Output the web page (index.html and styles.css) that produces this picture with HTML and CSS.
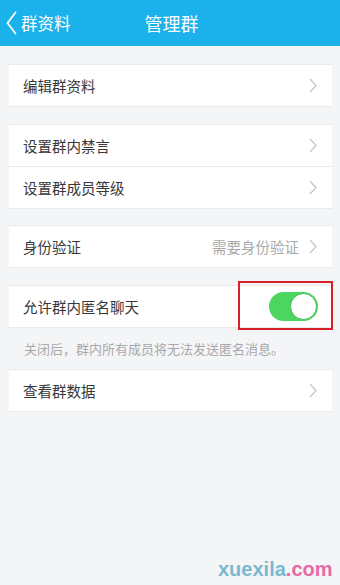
FILE: index.html
```html
<!DOCTYPE html>
<html lang="zh-CN">
<head>
<meta charset="utf-8">
<title>管理群</title>
<link rel="stylesheet" href="styles.css">
</head>
<body>
<header class="topbar">
  <div class="back">
    <svg class="back-arrow" width="11" height="24" viewBox="0 0 11 24"><polyline points="9.5,1.5 1.5,12 9.5,22.5" fill="none" stroke="#fff" stroke-width="1.8" stroke-linecap="round" stroke-linejoin="round"/></svg>
    <span>群资料</span>
  </div>
  <div class="title">管理群</div>
  <div></div>
</header>

<main class="content">
  <section class="card first">
    <div class="row"><span class="label">编辑群资料</span><svg class="chev" width="8" height="15" viewBox="0 0 8 15"><polyline points="1,1 7,7.5 1,14" fill="none" stroke="#c6c6ca" stroke-width="1.3"/></svg></div>
  </section>

  <section class="card second">
    <div class="row"><span class="label">设置群内禁言</span><svg class="chev" width="8" height="15" viewBox="0 0 8 15"><polyline points="1,1 7,7.5 1,14" fill="none" stroke="#c6c6ca" stroke-width="1.3"/></svg></div>
    <div class="row sep"><span class="label">设置群成员等级</span><svg class="chev" width="8" height="15" viewBox="0 0 8 15"><polyline points="1,1 7,7.5 1,14" fill="none" stroke="#c6c6ca" stroke-width="1.3"/></svg></div>
  </section>

  <section class="card third">
    <div class="row"><span class="label">身份验证</span><span class="right"><span class="value">需要身份验证</span><svg class="chev" width="8" height="15" viewBox="0 0 8 15"><polyline points="1,1 7,7.5 1,14" fill="none" stroke="#c6c6ca" stroke-width="1.3"/></svg></span></div>
  </section>

  <section class="card fourth">
    <div class="row"><span class="label">允许群内匿名聊天</span>
      <span class="toggle-wrap">
        <span class="toggle"><span class="knob"></span></span>
        <span class="highlight"></span>
      </span>
    </div>
  </section>
  <p class="hint">关闭后，群内所有成员将无法发送匿名消息。</p>

  <section class="card">
    <div class="row"><span class="label">查看群数据</span><svg class="chev" width="8" height="15" viewBox="0 0 8 15"><polyline points="1,1 7,7.5 1,14" fill="none" stroke="#c6c6ca" stroke-width="1.3"/></svg></div>
  </section>
</main>

<div class="watermark"><span class="wm-a">xuexila</span><span class="wm-b">.com</span></div>
</body>
</html>
```

FILE: styles.css
```css
html, body {
  margin: 0;
  padding: 0;
}
body {
  width: 340px;
  height: 585px;
  background: #f4f5f7;
  font-family: "Noto Sans CJK SC", "Noto Sans", sans-serif;
  position: relative;
  overflow: hidden;
}
.topbar {
  height: 46px;
  background: #1bb1ea;
  color: #fff;
  display: grid;
  grid-template-columns: 1fr auto 1fr;
  align-items: center;
}
.back {
  display: flex;
  align-items: center;
  padding-left: 6px;
  font-size: 16.5px;
  gap: 4px;
}
.back-arrow {
  display: block;
}
.title {
  font-size: 18px;
  padding-left: 3px;
}
.content {
  padding: 0 8px 0 9px;
}
.card {
  background: #fff;
  border-top: 1px solid #e9eaec;
  border-bottom: 1px solid #e9eaec;
}
.first { margin-top: 18px; }
.second { margin-top: 17px; }
.third { margin-top: 16px; }
.fourth { margin-top: 17px; }
.row {
  height: 41px;
  display: flex;
  align-items: center;
  justify-content: space-between;
  padding: 0 15px 0 14px;
}
.row.sep {
  border-top: 1px solid #e9eaec;
}
.label {
  font-size: 14.5px;
  color: #383838;
}
.chev {
  display: block;
}
.right {
  display: flex;
  align-items: center;
  gap: 10px;
}
.value {
  font-size: 14.5px;
  color: #a8a8a8;
}
.toggle-wrap {
  position: relative;
  display: block;
  margin-right: -1px;
}
.toggle {
  display: block;
  width: 49px;
  height: 29px;
  border-radius: 15px;
  background: #4cd660;
  position: relative;
}
.knob {
  position: absolute;
  right: 1px;
  top: 1px;
  width: 25px;
  height: 25px;
  border-radius: 50%;
  background: #fff;
  border: 1px solid #3fbf52;
}
.highlight {
  position: absolute;
  left: -31px;
  top: -11px;
  width: 95px;
  height: 49px;
  box-sizing: border-box;
  border: 2.5px solid #d8202a;
}
.hint {
  margin: 0;
  height: 41px;
  display: flex;
  align-items: center;
  padding-left: 15px;
  font-size: 13px;
  color: #a9a9a9;
}
.watermark {
  position: absolute;
  left: 218px;
  top: 556px;
  font-family: "Liberation Sans", Arial, sans-serif;
  font-weight: bold;
  font-size: 20px;
  line-height: 26px;
}
.wm-a { color: #7cb8d1; }
.wm-b { color: #e66aa6; }
```
